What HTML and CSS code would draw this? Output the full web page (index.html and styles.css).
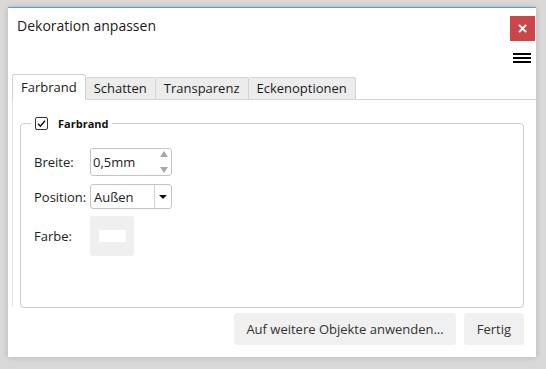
FILE: index.html
```html
<!DOCTYPE html>
<html lang="de">
<head>
<meta charset="utf-8">
<title>Dekoration anpassen</title>
<link rel="stylesheet" href="styles.css">
</head>
<body>
<div class="dialog">
  <div class="header">
    <div class="title">Dekoration anpassen</div>
    <button class="close" aria-label="Schließen">×</button>
  </div>
  <div class="menu-row">
    <span class="hamburger"><i></i><i></i><i></i></span>
  </div>
  <div class="tabs">
    <div class="tab active">Farbrand</div>
    <div class="tab">Schatten</div>
    <div class="tab">Transparenz</div>
    <div class="tab">Eckenoptionen</div>
  </div>
  <div class="pane">
    <fieldset class="group">
      <legend class="legend"><span class="check"><svg viewBox="0 0 13 13" width="13" height="13"><path d="M3 6.8 L5.4 9.2 L10 3.8" fill="none" stroke="#111" stroke-width="1.4"/></svg></span><span class="legend-text">Farbrand</span></legend>
      <div class="row row-spin">
        <span class="label">Breite:</span>
        <div class="spin">
          <span class="spin-value">0,5mm</span>
          <span class="spin-arrows"><i class="up"></i><i class="down"></i></span>
        </div>
      </div>
      <div class="row row-select">
        <span class="label">Position:</span>
        <div class="select">
          <span class="select-value">Außen</span>
          <span class="select-arrow"><i></i></span>
        </div>
      </div>
      <div class="row row-color">
        <span class="label">Farbe:</span>
        <div class="color-btn"><span class="swatch"></span></div>
      </div>
    </fieldset>
  </div>
  <div class="actions">
    <button class="btn">Auf weitere Objekte anwenden...</button>
    <button class="btn btn-done">Fertig</button>
  </div>
</div>
</body>
</html>
```

FILE: styles.css
```css
* { box-sizing: border-box; }
html, body { margin: 0; }
body {
  width: 546px;
  height: 369px;
  background: #d9d9d9;
  padding: 7px 0 0 8px;
  font-family: "Open Sans", "Noto Sans", sans-serif;
  color: #222;
  overflow: hidden;
}
.dialog {
  width: 528px;
  height: 350px;
  background: #fff;
  border-top: 1px solid #5b9bd5;
  box-shadow: 0 0 6px rgba(0,0,0,0.18);
  display: flex;
  flex-direction: column;
}
.header {
  display: flex;
  justify-content: space-between;
  align-items: flex-start;
  height: 38px;
}
.title {
  padding: 8px 0 0 9px;
  font-size: 14px;
  line-height: 20px;
  color: #1a1a1a;
}
.close {
  margin: 8px 1px 0 0;
  width: 25px;
  height: 25px;
  border: none;
  padding: 0;
  background: #c9474a;
  color: #fff;
  font-family: "DejaVu Sans", sans-serif;
  font-size: 14px;
  font-weight: bold;
  line-height: 25px;
}
.menu-row {
  height: 29px;
  display: flex;
  justify-content: flex-end;
  padding: 7px 5px 0 0;
}
.hamburger {
  display: flex;
  flex-direction: column;
  gap: 2px;
  width: 18px;
}
.hamburger i {
  display: block;
  height: 2px;
  background: #000;
}
.tabs {
  display: flex;
  align-items: flex-end;
  height: 25px;
  padding-left: 4px;
  margin-bottom: -1px;
}
.tab {
  height: 23px;
  padding: 0 8px;
  border: 1px solid #d3d3d3;
  border-left: none;
  background: #ececec;
  font-size: 13px;
  line-height: 21px;
  color: #1a1a1a;
  border-radius: 2px 2px 0 0;
}
.tab.active {
  height: 26px;
  background: #fff;
  border: 1px solid #cfcfcf;
  border-bottom: 1px solid #fff;
  padding: 0 8px;
  line-height: 24px;
  border-radius: 3px 3px 0 0;
  position: relative;
  z-index: 1;
}
.pane {
  margin-left: 4px;
  border-top: 1px solid #d3d3d3;
  border-left: 1px solid #e0e0e0;
  padding: 17px 12px 0 7px;
  height: 207px;
}
.group {
  margin: 0;
  height: 191px;
  border: 1px solid #cdcdcd;
  border-radius: 4px;
  padding: 18px 10px 0 10px;
}
.legend {
  padding: 0 4px;
  display: flex;
  align-items: center;
  gap: 10px;
  height: 13px;
}
.check {
  width: 13px;
  height: 13px;
  border: 1px solid #333;
  border-radius: 2px;
  display: flex;
}
.check svg { margin: -1px; }
.legend-text {
  font-size: 11px;
  font-weight: bold;
  color: #111;
}
.row {
  display: flex;
  align-items: center;
  margin-left: 3px;
}
.label {
  width: 56px;
  font-size: 13px;
  color: #222;
}
.row-spin { height: 28px; }
.row-select { height: 25px; margin-top: 8px; }
.row-color { height: 40px; margin-top: 7px; }
.spin {
  width: 82px;
  height: 28px;
  border: 1px solid #c4c4c4;
  border-radius: 3px;
  display: flex;
  align-items: center;
  justify-content: space-between;
  padding: 0 3px 0 2px;
}
.spin-value, .select-value { font-size: 13px; color: #222; }
.spin-arrows {
  display: flex;
  flex-direction: column;
  justify-content: space-between;
  height: 22px;
}
.spin-arrows i {
  width: 0; height: 0;
  border-left: 4px solid transparent;
  border-right: 4px solid transparent;
}
.spin-arrows .up { border-bottom: 6px solid #a8a8a8; }
.spin-arrows .down { border-top: 6px solid #a8a8a8; }
.select {
  width: 82px;
  height: 25px;
  border: 1px solid #c4c4c4;
  border-radius: 3px;
  display: flex;
  align-items: center;
  justify-content: space-between;
  padding-left: 3px;
}
.select-arrow {
  width: 17px;
  height: 23px;
  border-left: 1px solid #d0d0d0;
  display: flex;
  align-items: center;
  justify-content: center;
}
.select-arrow i {
  width: 0; height: 0;
  border-left: 4px solid transparent;
  border-right: 4px solid transparent;
  border-top: 4px solid #111;
}
.color-btn {
  width: 44px;
  height: 40px;
  background: #efefef;
  border-radius: 3px;
  display: flex;
  align-items: center;
  justify-content: center;
}
.swatch {
  width: 27px;
  height: 12px;
  background: #fff;
}
.actions {
  display: flex;
  justify-content: flex-end;
  gap: 8px;
  padding: 0 12px 0 0;
  margin-top: 7px;
}
.btn {
  height: 32px;
  border: none;
  border-radius: 3px;
  background: #f0f0f0;
  font-family: "Open Sans", "Noto Sans", sans-serif;
  font-size: 13px;
  color: #333;
  padding: 0 12px;
}
.btn-done { padding: 0 13px; }
```
